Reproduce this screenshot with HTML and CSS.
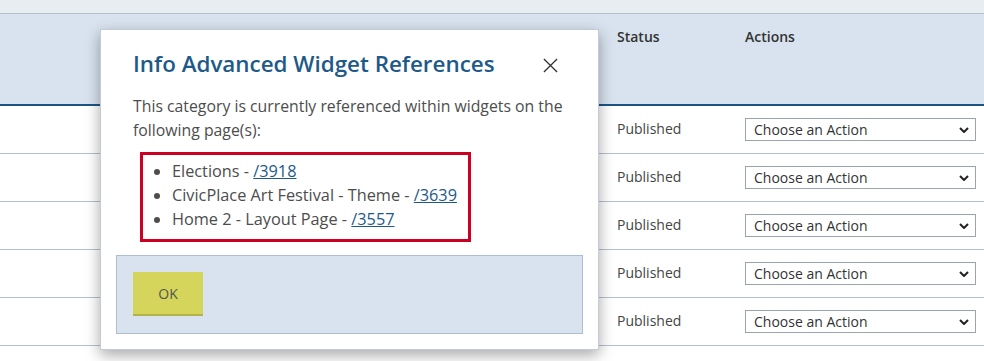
FILE: index.html
```html
<!DOCTYPE html>
<html lang="en">
<head>
<meta charset="utf-8">
<title>Info Advanced Widget References</title>
<link rel="stylesheet" href="styles.css">
</head>
<body>
<div class="page">
  <div class="topbar"></div>
  <div class="table">
    <div class="thead">
      <div class="cell name"></div>
      <div class="cell status">Status</div>
      <div class="cell actions">Actions</div>
    </div>
    <div class="row"><div class="cell name"></div><div class="cell status">Published</div><div class="cell actions"><div class="select"><span>Choose an Action</span><svg class="chev" viewBox="0 0 10 6" width="10" height="6"><path d="M1 1l4 4 4-4" fill="none" stroke="#222" stroke-width="2"/></svg></div></div></div>
    <div class="row"><div class="cell name"></div><div class="cell status">Published</div><div class="cell actions"><div class="select"><span>Choose an Action</span><svg class="chev" viewBox="0 0 10 6" width="10" height="6"><path d="M1 1l4 4 4-4" fill="none" stroke="#222" stroke-width="2"/></svg></div></div></div>
    <div class="row"><div class="cell name"></div><div class="cell status">Published</div><div class="cell actions"><div class="select"><span>Choose an Action</span><svg class="chev" viewBox="0 0 10 6" width="10" height="6"><path d="M1 1l4 4 4-4" fill="none" stroke="#222" stroke-width="2"/></svg></div></div></div>
    <div class="row"><div class="cell name"></div><div class="cell status">Published</div><div class="cell actions"><div class="select"><span>Choose an Action</span><svg class="chev" viewBox="0 0 10 6" width="10" height="6"><path d="M1 1l4 4 4-4" fill="none" stroke="#222" stroke-width="2"/></svg></div></div></div>
    <div class="row"><div class="cell name"></div><div class="cell status">Published</div><div class="cell actions"><div class="select"><span>Choose an Action</span><svg class="chev" viewBox="0 0 10 6" width="10" height="6"><path d="M1 1l4 4 4-4" fill="none" stroke="#222" stroke-width="2"/></svg></div></div></div>
    <div class="row row-last"><div class="cell name"></div><div class="cell status"></div><div class="cell actions"><div class="select"></div></div></div>
  </div>

  <div class="dialog" role="dialog">
    <div class="dialog-head">
      <h2 class="dialog-title">Info Advanced Widget References</h2>
      <svg class="close" viewBox="0 0 16 16" width="16" height="16"><path d="M1 1L15 15M15 1L1 15" stroke="#333" stroke-width="1.4" fill="none"/></svg>
    </div>
    <p class="dialog-text">This category is currently referenced within widgets on the following page(s):</p>
    <div class="refbox">
      <ul class="reflist">
        <li>Elections - <a href="#">/3918</a></li>
        <li>CivicPlace Art Festival - Theme - <a href="#">/3639</a></li>
        <li>Home 2 - Layout Page - <a href="#">/3557</a></li>
      </ul>
    </div>
    <div class="dialog-foot">
      <button class="ok">OK</button>
    </div>
  </div>
</div>
</body>
</html>
```

FILE: styles.css
```css
* { box-sizing: border-box; }
html, body { margin: 0; padding: 0; }
body {
  width: 984px;
  height: 361px;
  overflow: hidden;
  background: #fff;
  font-family: "Open Sans", "Lato", sans-serif;
  color: #444;
}
.page { position: relative; height: 361px; overflow: hidden; }
.topbar {
  height: 14px;
  background: #e8edf2;
  border-bottom: 1px solid #b4c0cd;
}
.table { display: flex; flex-direction: column; }
.thead, .row {
  display: grid;
  grid-template-columns: 605px 128px 251px;
}
.thead {
  height: 92px;
  background: #d9e3ef;
  border-bottom: 2px solid #1b5584;
  font-weight: 600;
  font-size: 14px;
  color: #333;
}
.thead .cell { padding: 13px 0 0 12px; }
.row {
  height: 48px;
  border-bottom: 1px solid #b4c0cd;
  font-size: 14px;
  color: #444;
}
.row .cell { display: flex; align-items: center; padding-left: 12px; }
.row .status { padding-bottom: 3px; }
.select {
  width: 231px;
  height: 23px;
  border: 1px solid #9aa4b0;
  background: #fff;
  display: flex;
  align-items: center;
  justify-content: space-between;
  padding: 0 6px 0 8px;
  font-size: 14px;
  color: #333;
}
.row-last .cell { align-items: flex-end; }
.chev { display: block; }

.dialog {
  position: absolute;
  left: 100px;
  top: 29px;
  width: 499px;
  height: 321px;
  background: #fff;
  border: 1px solid #c3ccd6;
  box-shadow: 0 5px 14px rgba(0, 0, 0, 0.35);
  padding: 19px 15px 15px 15px;
  display: flex;
  flex-direction: column;
}
.dialog-head {
  display: flex;
  align-items: center;
  justify-content: space-between;
  padding: 0 25px 0 17px;
}
.dialog-title {
  margin: 0;
  font-size: 22.4px;
  font-weight: 600;
  color: #1d5a8a;
  line-height: 30px;
}
.close { display: block; margin-top: 2px; width: 15px; height: 15px; }
.dialog-text {
  margin: 15px 0 0 0;
  padding: 0 17px;
  font-size: 15.8px;
  line-height: 24px;
  color: #4d4d4d;
}
.refbox {
  align-self: flex-start;
  margin: 10px 0 0 24px;
  border: 3px solid #cc0022;
  padding: 4px 11px 8px 0;
}
.reflist {
  margin: 0;
  padding-left: 29px;
  font-size: 16.3px;
  line-height: 24px;
  color: #4d4d4d;
}
.reflist a { color: #1d5a8a; text-decoration: underline; }
.dialog-foot {
  margin-top: auto;
  height: 79px;
  background: #d9e3ef;
  border: 1px solid #aebdd0;
  padding: 16px;
}
.ok {
  width: 70px;
  height: 44px;
  background: #d4d55a;
  border: 0;
  border-bottom: 2px solid #b2b24a;
  font-family: "Open Sans", sans-serif;
  font-size: 14px;
  color: #555;
  padding: 0;
}
```
